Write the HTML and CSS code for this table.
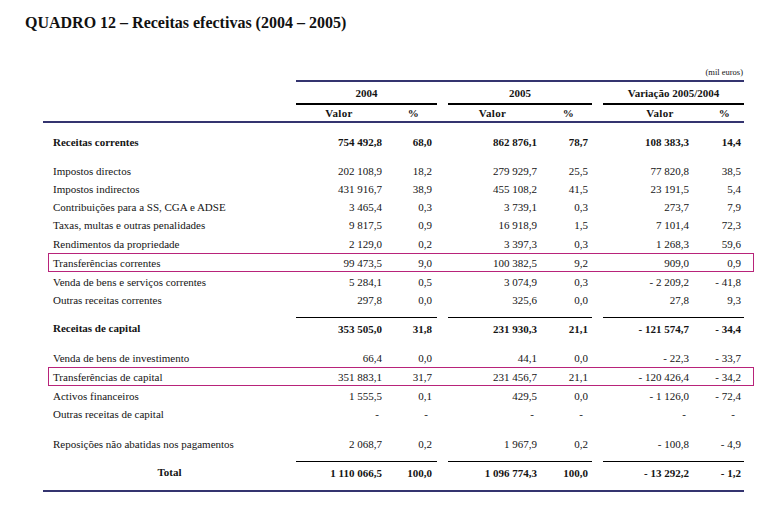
FILE: index.html
```html
<!DOCTYPE html>
<html lang="pt">
<head>
<meta charset="utf-8">
<title>QUADRO 12 – Receitas efectivas (2004 – 2005)</title>
<link rel="stylesheet" href="styles.css">
</head>
<body>
<div class="page">
  <h1 class="title">QUADRO 12 – Receitas efectivas (2004 – 2005)</h1>
  <div class="units">(mil euros)</div>
  <table class="tbl">
    <colgroup>
      <col class="c-label"><col class="c-val"><col class="c-pct"><col class="c-gap">
      <col class="c-val2"><col class="c-pct"><col class="c-gap">
      <col class="c-val"><col class="c-pct">
    </colgroup>
    <thead>
      <tr class="h1">
        <th class="nol"></th>
        <th colspan="2" class="yr">2004</th>
        <th class="gap"></th>
        <th colspan="2" class="yr">2005</th>
        <th class="gap"></th>
        <th colspan="2" class="yr">Variação 2005/2004</th>
      </tr>
      <tr class="h2">
        <th></th>
        <th class="hv">Valor</th><th class="hp">%</th><th></th>
        <th class="hv">Valor</th><th class="hp">%</th><th></th>
        <th class="hv hv3">Valor</th><th class="hp hp3">%</th>
      </tr>
    </thead>
    <tbody>
      <tr class="sp s9"><td colspan="9"></td></tr>
      <tr class="row r18 bold"><td class="lbl">Receitas correntes</td><td>754 492,8</td><td class="p">68,0</td><td></td><td>862 876,1</td><td class="p p2">78,7</td><td></td><td>108 383,3</td><td class="p p3">14,4</td></tr>
      <tr class="sp s11"><td colspan="9"></td></tr>
      <tr class="row r18"><td class="lbl">Impostos directos</td><td>202 108,9</td><td class="p">18,2</td><td></td><td>279 929,7</td><td class="p p2">25,5</td><td></td><td>77 820,8</td><td class="p p3">38,5</td></tr>
      <tr class="row r18"><td class="lbl">Impostos indirectos</td><td>431 916,7</td><td class="p">38,9</td><td></td><td>455 108,2</td><td class="p p2">41,5</td><td></td><td>23 191,5</td><td class="p p3">5,4</td></tr>
      <tr class="row r18"><td class="lbl">Contribuições para a SS, CGA e ADSE</td><td>3 465,4</td><td class="p">0,3</td><td></td><td>3 739,1</td><td class="p p2">0,3</td><td></td><td>273,7</td><td class="p p3">7,9</td></tr>
      <tr class="row r19"><td class="lbl">Taxas, multas e outras penalidades</td><td>9 817,5</td><td class="p">0,9</td><td></td><td>16 918,9</td><td class="p p2">1,5</td><td></td><td>7 101,4</td><td class="p p3">72,3</td></tr>
      <tr class="row r19"><td class="lbl">Rendimentos da propriedade</td><td>2 129,0</td><td class="p">0,2</td><td></td><td>3 397,3</td><td class="p p2">0,3</td><td></td><td>1 268,3</td><td class="p p3">59,6</td></tr>
      <tr class="row r19"><td class="lbl boxed">Transferências correntes</td><td>99 473,5</td><td class="p">9,0</td><td></td><td>100 382,5</td><td class="p p2">9,2</td><td></td><td>909,0</td><td class="p p3">0,9</td></tr>
      <tr class="row r18"><td class="lbl">Venda de bens e serviços correntes</td><td>5 284,1</td><td class="p">0,5</td><td></td><td>3 074,9</td><td class="p p2">0,3</td><td></td><td>- 2 209,2</td><td class="p p3">- 41,8</td></tr>
      <tr class="row r18"><td class="lbl">Outras receitas correntes</td><td>297,8</td><td class="p">0,0</td><td></td><td>325,6</td><td class="p p2">0,0</td><td></td><td>27,8</td><td class="p p3">9,3</td></tr>
      <tr class="sp s9"><td colspan="9"></td></tr>
      <tr class="row r20 sub bold"><td class="lbl">Receitas de capital</td><td class="ln">353 505,0</td><td class="p ln">31,8</td><td></td><td class="ln">231 930,3</td><td class="p p2 ln">21,1</td><td></td><td class="ln">- 121 574,7</td><td class="p p3 ln">- 34,4</td></tr>
      <tr class="sp s10"><td colspan="9"></td></tr>
      <tr class="row r19"><td class="lbl">Venda de bens de investimento</td><td>66,4</td><td class="p">0,0</td><td></td><td>44,1</td><td class="p p2">0,0</td><td></td><td>- 22,3</td><td class="p p3">- 33,7</td></tr>
      <tr class="row r19"><td class="lbl boxed">Transferências de capital</td><td>351 883,1</td><td class="p">31,7</td><td></td><td>231 456,7</td><td class="p p2">21,1</td><td></td><td>- 120 426,4</td><td class="p p3">- 34,2</td></tr>
      <tr class="row r18"><td class="lbl">Activos financeiros</td><td>1 555,5</td><td class="p">0,1</td><td></td><td>429,5</td><td class="p p2">0,0</td><td></td><td>- 1 126,0</td><td class="p p3">- 72,4</td></tr>
      <tr class="row r18"><td class="lbl">Outras receitas de capital</td><td class="dash">-</td><td class="p dashp">-</td><td></td><td class="dash">-</td><td class="p p2 dashp">-</td><td></td><td class="dash">-</td><td class="p p3 dashp">-</td></tr>
      <tr class="sp s12"><td colspan="9"></td></tr>
      <tr class="row r18"><td class="lbl">Reposições não abatidas nos pagamentos</td><td>2 068,7</td><td class="p">0,2</td><td></td><td>1 967,9</td><td class="p p2">0,2</td><td></td><td>- 100,8</td><td class="p p3">- 4,9</td></tr>
      <tr class="sp s9"><td colspan="9"></td></tr>
      <tr class="row r20 sub bold"><td class="lbl total">Total</td><td class="ln">1 110 066,5</td><td class="p ln">100,0</td><td></td><td class="ln">1 096 774,3</td><td class="p p2 ln">100,0</td><td></td><td class="ln">- 13 292,2</td><td class="p p3 ln">- 1,2</td></tr>
      <tr class="sp end"><td colspan="9"></td></tr>
    </tbody>
  </table>
</div>
</body>
</html>
```

FILE: styles.css
```css
html, body {
  margin: 0;
  padding: 0;
  background: #ffffff;
}

.page {
  font-family: "Liberation Serif", "Times New Roman", serif;
  color: #141414;
  padding-top: 14px;
}

.title {
  margin: 0 0 0 25px;
  font-size: 16px;
  line-height: 18px;
  font-weight: bold;
  color: #111;
}

.units {
  width: 700px;
  margin: 35px 0 0 43px;
  text-align: right;
  font-size: 8.5px;
  line-height: 11px;
}

.tbl {
  margin: 2px 0 0 43px;
  width: 700px;
  table-layout: fixed;
  border-collapse: separate;
  border-spacing: 0;
  font-size: 11px;
}

.c-label { width: 253px; }
.c-val { width: 86px; }
.c-val2 { width: 89px; }
.c-pct { width: 55px; }
.c-gap { width: 11px; }

.tbl th, .tbl td {
  padding: 0;
  white-space: nowrap;
}

.h1 th {
  height: 21px;
  border-top: 2px solid #34346f;
  font-weight: bold;
  vertical-align: middle;
  text-align: center;
}

.h1 th.nol {
  border-top: none;
}

.h1 th.yr {
  border-bottom: 2px solid #000;
}

.h2 th {
  height: 16px;
  border-bottom: 2px solid #34346f;
  font-weight: bold;
  text-align: center;
  vertical-align: middle;
  letter-spacing: 0.3px;
}

.h2 th.hp {
  padding-left: 8px;
}

.h2 th.hv3 {
  padding-left: 28px;
}

.h2 th.hp3 {
  padding-left: 16px;
}

.sp td {
  padding: 0;
  font-size: 0;
  line-height: 0;
}

.s9 td { height: 9px; }
.s10 td { height: 10px; }
.s11 td { height: 11px; }
.s12 td { height: 12px; }

.end td {
  height: 8px;
  border-bottom: 2px solid #34346f;
}

.row td {
  text-align: right;
  vertical-align: top;
  padding-top: 2px;
}

.r18 td { height: 16px; line-height: 16px; }
.r19 td { height: 17px; line-height: 17px; }
.r20 td { height: 18px; line-height: 18px; }

.row.bold td {
  font-weight: bold;
}

.row td.lbl {
  text-align: left;
  padding-left: 10px;
}

.row td.total {
  text-align: center;
  padding-left: 0;
}

.row td.p {
  padding-right: 5px;
}

.row td.p2 {
  padding-right: 4px;
}

.row td.p3 {
  padding-right: 3px;
}

.row td.dash {
  padding-right: 3px;
}

.row td.dashp {
  padding-right: 9px;
}

.row.sub td.ln {
  border-top: 1px solid #000;
}

.boxed {
  position: relative;
}

.boxed::after {
  content: "";
  position: absolute;
  z-index: 1;
  left: 5px;
  top: 0;
  width: 706px;
  height: 19px;
  box-sizing: border-box;
  border: 1px solid #b8237a;
}
```
